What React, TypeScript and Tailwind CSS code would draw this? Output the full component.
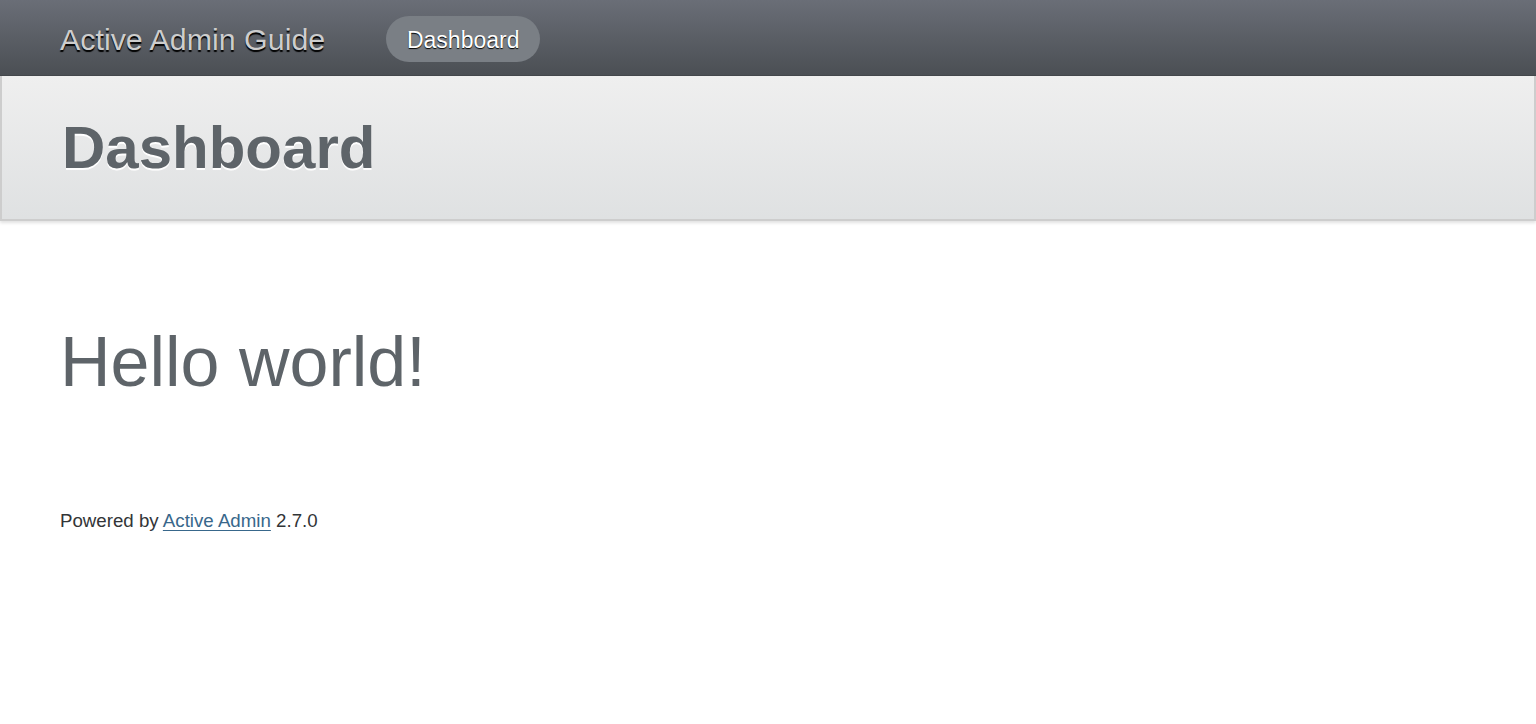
export default function App() {
  return (
    <div className="min-h-screen bg-white font-['Liberation_Sans',Arial,sans-serif] text-[#323537]">
      {/* Top header */}
      <div className="flex h-[76px] items-center bg-gradient-to-b from-[#6a6e77] to-[#4b4f54] border-b border-[#44484c] pl-[60px]">
        <h1 className="text-[30.4px] font-normal leading-none text-[#cdcdcd] [text-shadow:0_2px_1px_#000] mr-[61px] mt-[3px]">
          Active Admin Guide
        </h1>
        <a className="flex h-[46px] w-[154px] items-center justify-center rounded-[23px] bg-[#7a7f85] text-[23px] leading-none text-white [text-shadow:0_1px_1px_#000] mt-[3px]">
          <span className="mt-[2px]">Dashboard</span>
        </a>
      </div>

      {/* Title bar */}
      <div className="flex h-[145px] items-center bg-gradient-to-b from-[#efefef] to-[#dfe1e2] border-x-2 border-b-2 border-[#cdcdcd] shadow-[0_2px_3px_rgba(0,0,0,0.12)] pl-[60px]">
        <h2 className="text-[60px] font-bold leading-none text-[#5e6469] [text-shadow:0_2px_0_#fff]">
          Dashboard
        </h2>
      </div>

      {/* Content */}
      <div className="px-[60px] pt-[106px]">
        <p className="text-[70px] leading-none text-[#5e6469]">Hello world!</p>
      </div>

      {/* Footer */}
      <div className="px-[60px] pt-[115px] text-[18.7px] leading-none">
        Powered by{' '}
        <a className="text-[#38678b] underline underline-offset-[3px]">Active Admin</a>{' '}
        2.7.0
      </div>
    </div>
  )
}
